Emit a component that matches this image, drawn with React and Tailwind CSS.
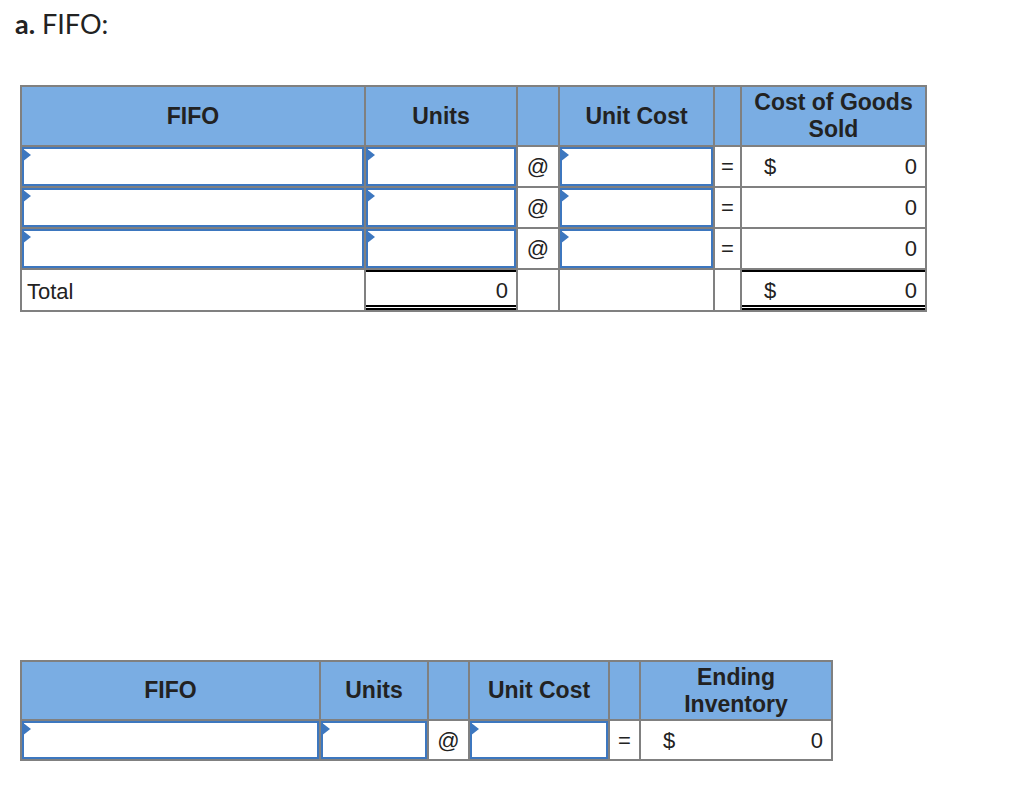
import React from 'react';

const sans = { fontFamily: '"Liberation Sans", Arial, sans-serif' };

function Tri() {
  return (
    <span className="absolute left-[-2px] top-[-1px] w-0 h-0 border-y-[7px] border-y-transparent border-l-[9px] border-l-[#3d77bf]" />
  );
}

function InputCell() {
  return (
    <div className="relative bg-white border-2 border-[#3d77bf]">
      <Tri />
    </div>
  );
}

function Head({ children }) {
  return (
    <div className="bg-[#7aade3] flex items-center justify-center text-center font-bold text-[23px] leading-[27px] text-[#222]">
      {children}
    </div>
  );
}

function Sym({ children }) {
  return <div className="bg-white flex items-center justify-center text-[22px] text-[#222]">{children}</div>;
}

function Amount({ dollar, value, total }) {
  return (
    <div className="bg-white flex">
      <div
        className={`flex-1 flex items-center justify-between pl-[22px] pr-[8px] text-[22px] text-[#222] ${
          total ? 'pt-[3px] border-t-2 border-t-black border-b-[5px] border-b-black border-double' : ''
        }`}
      >
        <span>{dollar ? '$' : ''}</span>
        <span>{value}</span>
      </div>
    </div>
  );
}

export default function App() {
  return (
    <div className="bg-white min-h-[789px] w-[1024px]" style={sans}>
      <div className="pl-[15px] pt-[8px] text-[27px] leading-[32px] text-[#222]" style={{ fontFamily: 'Lato, "Open Sans", sans-serif' }}>
        <span className="font-bold">a.</span> FIFO:
      </div>

      {/* Cost of goods sold table */}
      <div className="mt-[45px] ml-[20px] w-fit grid grid-cols-[342px_150px_40px_153px_25px_183px] grid-rows-[58px_39px_39px_39px_40px] gap-[2px] p-[2px] bg-[#808080]">
        <Head>FIFO</Head>
        <Head>Units</Head>
        <Head />
        <Head>Unit Cost</Head>
        <Head />
        <Head>
          Cost of Goods
          <br />
          Sold
        </Head>

        {[0, 1, 2].map(i => (
          <React.Fragment key={i}>
            <InputCell />
            <InputCell />
            <Sym>@</Sym>
            <InputCell />
            <Sym>=</Sym>
            <Amount dollar={i === 0} value="0" />
          </React.Fragment>
        ))}

        <div className="bg-white flex items-center pl-[5px] pt-[3px] text-[22px] text-[#222]">Total</div>
        <div className="bg-white flex">
          <div className="flex-1 flex items-center justify-end pr-[8px] pt-[3px] text-[22px] text-[#222] border-t-2 border-t-black border-b-[5px] border-b-black border-double">
            0
          </div>
        </div>
        <div className="bg-white" />
        <div className="bg-white" />
        <div className="bg-white" />
        <Amount dollar value="0" total />
      </div>

      {/* Ending inventory table */}
      <div className="mt-[348px] ml-[20px] w-fit grid grid-cols-[297px_106px_39px_138px_29px_190px] grid-rows-[57px_38px] gap-[2px] p-[2px] bg-[#808080]">
        <Head>FIFO</Head>
        <Head>Units</Head>
        <Head />
        <Head>Unit Cost</Head>
        <Head />
        <Head>
          Ending
          <br />
          Inventory
        </Head>

        <InputCell />
        <InputCell />
        <Sym>@</Sym>
        <InputCell />
        <Sym>=</Sym>
        <Amount dollar value="0" />
      </div>
    </div>
  );
}
